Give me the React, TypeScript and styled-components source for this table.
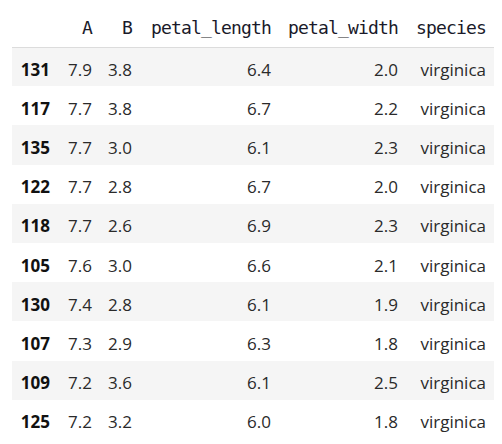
import React from "react";
import styled, { createGlobalStyle } from "styled-components";

const GlobalStyle = createGlobalStyle`
  html, body { margin: 0; padding: 0; background: #ffffff; }
  body { font-family: "Open Sans", "Noto Sans", sans-serif; }
`;

const Wrapper = styled.div`
  padding: 0 0 0 12px;
  width: 482px;
`;

const Table = styled.table`
  border-collapse: collapse;
  border-spacing: 0;
  table-layout: fixed;
  width: 482px;
  color: #1f1f1f;
`;

const HeadCell = styled.th<{ $w: number }>`
  width: ${(p) => p.$w}px;
  height: 47px;
  padding: 0 8px 8px 8px;
  box-sizing: border-box;
  vertical-align: bottom;
  text-align: right;
  font-family: "DejaVu Sans Mono", "Liberation Mono", monospace;
  font-size: 18px;
  letter-spacing: -0.84px;
  font-weight: normal;
  line-height: 22px;
  color: #1a1a2a;
  white-space: nowrap;
  border-bottom: 1px solid #dcdcdc;
`;

const Row = styled.tr<{ $striped: boolean }>`
  height: 39.2px;
  background: ${(p) => (p.$striped ? "#f5f5f5" : "#ffffff")};
`;

const IndexCell = styled.th`
  padding: 6px 10px 0 8px;
  text-align: right;
  vertical-align: middle;
  font-size: 17px;
  line-height: 22px;
  font-weight: bold;
  color: #111111;
`;

const Cell = styled.td`
  padding: 6px 8px 0 8px;
  text-align: right;
  vertical-align: middle;
  font-size: 17px;
  line-height: 22px;
  font-weight: normal;
  color: #2a2a2a;
  white-space: nowrap;
`;

const columns = [
  { key: "", w: 48 },
  { key: "A", w: 40 },
  { key: "B", w: 40 },
  { key: "petal_length", w: 139 },
  { key: "petal_width", w: 127 },
  { key: "species", w: 88 },
];

const rows: [string, string, string, string, string, string][] = [
  ["131", "7.9", "3.8", "6.4", "2.0", "virginica"],
  ["117", "7.7", "3.8", "6.7", "2.2", "virginica"],
  ["135", "7.7", "3.0", "6.1", "2.3", "virginica"],
  ["122", "7.7", "2.8", "6.7", "2.0", "virginica"],
  ["118", "7.7", "2.6", "6.9", "2.3", "virginica"],
  ["105", "7.6", "3.0", "6.6", "2.1", "virginica"],
  ["130", "7.4", "2.8", "6.1", "1.9", "virginica"],
  ["107", "7.3", "2.9", "6.3", "1.8", "virginica"],
  ["109", "7.2", "3.6", "6.1", "2.5", "virginica"],
  ["125", "7.2", "3.2", "6.0", "1.8", "virginica"],
];

export default function App() {
  return (
    <>
      <GlobalStyle />
      <Wrapper>
        <Table>
          <thead>
            <tr>
              {columns.map((c) => (
                <HeadCell key={c.key || "idx"} $w={c.w}>
                  {c.key}
                </HeadCell>
              ))}
            </tr>
          </thead>
          <tbody>
            {rows.map((r, i) => (
              <Row key={r[0]} $striped={i % 2 === 0}>
                <IndexCell>{r[0]}</IndexCell>
                {r.slice(1).map((v, j) => (
                  <Cell key={j}>{v}</Cell>
                ))}
              </Row>
            ))}
          </tbody>
        </Table>
      </Wrapper>
    </>
  );
}
